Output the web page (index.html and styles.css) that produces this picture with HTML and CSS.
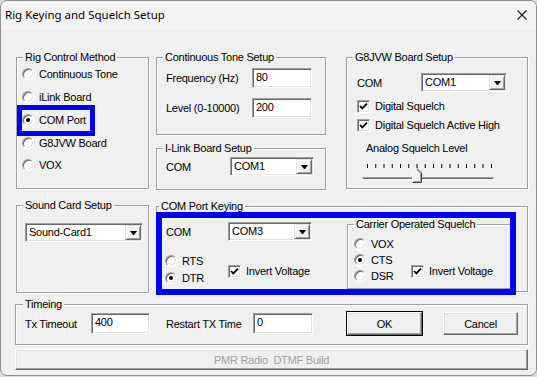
FILE: index.html
```html
<!DOCTYPE html>
<html lang="en">
<head>
  <meta charset="UTF-8" />
  <title>Rig Keying and Squelch Setup</title>
  <link rel="stylesheet" href="styles.css">
</head>
<body>
  <div class="window">
    <div class="titlebar">
      <span class="title">Rig Keying and Squelch Setup</span>
      <svg class="close" width="10" height="10" viewBox="0 0 10 10">
        <path d="M0.5 0.5 L9.5 9.5 M9.5 0.5 L0.5 9.5" stroke="#1a1a1a" stroke-width="1.1" fill="none" />
      </svg>
    </div>

    <div class="client">
      <!-- top row: method, tone + ilink, g8jvw -->
      <div class="row row-top">
        <div class="group rig">
          <span class="legend">Rig Control Method</span>
          <div class="radio-list">
            <div class="opt"><span class="radio"></span>Continuous Tone</div>
            <div class="opt"><span class="radio"></span>iLink Board</div>
            <div class="opt"><span class="radio on"></span>COM Port<span class="mark mark-com"></span></div>
            <div class="opt"><span class="radio"></span>G8JVW Board</div>
            <div class="opt"><span class="radio"></span>VOX</div>
          </div>
        </div>

        <div class="stack">
          <div class="group tone">
            <span class="legend">Continuous Tone Setup</span>
            <div class="tone-grid">
              <span>Frequency (Hz)</span>
              <div class="field">80</div>
              <span>Level (0-10000)</span>
              <div class="field">200</div>
            </div>
          </div>
          <div class="group ilink">
            <span class="legend">I-Link Board Setup</span>
            <div class="field-row">
              <span class="lbl-64">COM</span>
              <div class="combo w84"><span class="combo-text">COM1</span><span class="drop"></span></div>
            </div>
          </div>
        </div>

        <div class="group g8">
          <span class="legend">G8JVW Board Setup</span>
          <div class="field-row">
            <span class="lbl-64">COM</span>
            <div class="combo w86"><span class="combo-text">COM1</span><span class="drop"></span></div>
          </div>
          <div class="checks">
            <div class="opt chk-row"><span class="check"><svg width="9" height="9" viewBox="0 0 9 9"><path d="M1 4 L3.3 6.4 L8 1.7" stroke="#000" stroke-width="1.8" fill="none" /></svg></span>Digital Squelch</div>
            <div class="opt chk-row"><span class="check"><svg width="9" height="9" viewBox="0 0 9 9"><path d="M1 4 L3.3 6.4 L8 1.7" stroke="#000" stroke-width="1.8" fill="none" /></svg></span>Digital Squelch Active High</div>
          </div>
          <div class="slider-label">Analog Squelch Level</div>
          <svg class="slider" width="140" height="20" viewBox="0 0 140 20">
            <g stroke="#000" stroke-width="1">
              <path d="M7.5 0 V4 M15.75 0 V4 M24 0 V4 M32.25 0 V4 M40.5 0 V4 M48.75 0 V4 M57 0 V4 M65.25 0 V4 M73.5 0 V4 M81.75 0 V4 M90 0 V4 M98.25 0 V4 M106.5 0 V4 M114.75 0 V4 M123 0 V4 M131.5 0 V4" />
            </g>
            <path d="M2 13.5 H134" stroke="#a0a0a0" />
            <path d="M3 14.5 H133" stroke="#696969" />
            <path d="M2 15.5 H134" stroke="#fff" />
            <polygon points="52.5,9 57,4.5 61.5,9 61.5,18.5 52.5,18.5" fill="#f0f0f0" />
            <path d="M52.5 18 V9 L57 4.5" stroke="#fff" fill="none" />
            <path d="M57 4.5 L61.5 9 V18.5 H52.5" stroke="#404040" fill="none" />
            <path d="M57 5.8 L60.5 9.3 V17.5 H53.5" stroke="#a0a0a0" fill="none" />
          </svg>
        </div>
      </div>

      <!-- middle row: sound card, com port keying -->
      <div class="row row-mid">
        <div class="group sound">
          <span class="legend">Sound Card Setup</span>
          <div class="combo w118"><span class="combo-text">Sound-Card1</span><span class="drop"></span></div>
        </div>

        <div class="group keying">
          <span class="legend legend-tight">COM Port Keying</span>
          <div class="key-left">
            <div class="field-row">
              <span class="lbl-62">COM</span>
              <div class="combo w84"><span class="combo-text">COM3</span><span class="drop"></span></div>
            </div>
            <div class="key-lower">
              <div class="radios-key">
                <div class="opt"><span class="radio"></span>RTS</div>
                <div class="opt"><span class="radio on"></span>DTR</div>
              </div>
              <div class="opt chk-row key-check"><span class="check"><svg width="9" height="9" viewBox="0 0 9 9"><path d="M1 4 L3.3 6.4 L8 1.7" stroke="#000" stroke-width="1.8" fill="none" /></svg></span>Invert Voltage</div>
            </div>
          </div>
          <div class="group carrier">
            <span class="legend">Carrier Operated Squelch</span>
            <div class="car-body">
              <div class="radios-car">
                <div class="opt"><span class="radio"></span>VOX</div>
                <div class="opt"><span class="radio on"></span>CTS</div>
                <div class="opt"><span class="radio"></span>DSR</div>
              </div>
              <div class="opt chk-row car-check"><span class="check"><svg width="9" height="9" viewBox="0 0 9 9"><path d="M1 4 L3.3 6.4 L8 1.7" stroke="#000" stroke-width="1.8" fill="none" /></svg></span>Invert Voltage</div>
            </div>
          </div>
          <span class="mark mark-keying"></span>
        </div>
      </div>

      <!-- timing row -->
      <div class="group timing">
        <span class="legend legend-wide">Timeing</span>
        <div class="timing-row">
          <span class="lbl-tx">Tx Timeout</span>
          <div class="field w59">400</div>
          <span class="lbl-restart">Restart TX Time</span>
          <div class="field w60">0</div>
          <div class="btn btn-ok">OK</div>
          <div class="btn btn-cancel">Cancel</div>
        </div>
      </div>

      <div class="btn build">PMR Radio  DTMF Build</div>
    </div>
  </div>
</body>
</html>
```

FILE: styles.css
```css
* {
  box-sizing: border-box;
}

body {
  margin: 0;
  background: #dcdcdc;
  font-family: 'Liberation Sans', Arial, sans-serif;
  font-size: 11px;
  letter-spacing: -0.25px;
  color: #000;
}

.window {
  width: 537px;
  height: 376px;
  background: #f0f0f0;
  border: 1px solid #8e8e8e;
  border-radius: 7px;
  overflow: hidden;
}

.titlebar {
  height: 29px;
  background: #f4f4f6;
  display: flex;
  align-items: center;
  justify-content: space-between;
  padding: 0 9px 0 4px;
}

.title {
  font-family: 'Noto Sans', sans-serif;
  font-size: 11.5px;
  letter-spacing: 0;
  color: #000;
  padding-bottom: 2px;
}

.close {
  display: block;
  margin-bottom: 2px;
}

.client {
  padding: 27px 0 0 15px;
}

.row {
  display: flex;
  align-items: flex-start;
}

/* group boxes */
.group {
  position: relative;
  border: 1px solid #a0a0a0;
  box-shadow: 1px 1px 0 #fff, inset 1px 1px 0 #fff;
}

.legend {
  position: absolute;
  top: -7px;
  left: 6px;
  padding: 0 2px;
  background: #f0f0f0;
  line-height: 13px;
  white-space: nowrap;
}

.legend-tight { left: 2px; }
.legend-wide { left: 7px; }

.rig {
  width: 133px;
  height: 132px;
  padding: 5px 0 0 5px;
}

.stack {
  margin-left: 7px;
  width: 170px;
}

.tone {
  height: 78px;
  padding: 10px 0 0 9px;
}

.tone-grid {
  display: grid;
  grid-template-columns: 86px 60px;
  row-gap: 10px;
  align-items: center;
}

.ilink {
  margin-top: 13px;
  height: 42px;
  padding: 8px 0 0 9px;
}

.g8 {
  margin-left: 20px;
  width: 182px;
  height: 132px;
  padding: 15px 0 0 10px;
}

.sound {
  width: 133px;
  height: 88px;
  padding: 17px 0 0 8px;
}

.keying {
  margin-left: 7px;
  margin-top: 1px;
  width: 372px;
  height: 86px;
  display: flex;
  align-items: flex-start;
}

.timing {
  margin: 11px 0 0 -1px;
  width: 513px;
  height: 41px;
  padding: 7px 0 0 9px;
}

.row-mid {
  margin-top: 15px;
}

/* option rows */
.radio-list .opt {
  height: 22.75px;
}

.opt {
  position: relative;
  display: flex;
  align-items: center;
  gap: 5px;
  white-space: nowrap;
}

.radio {
  flex: none;
  width: 12px;
  height: 12px;
  border-radius: 50%;
  background: #fff;
  border: 1px solid;
  border-color: #a0a0a0 #fff #fff #a0a0a0;
  box-shadow: inset 1px 1px 0 #696969, inset -1px -1px 0 #e3e3e3;
  display: flex;
  align-items: center;
  justify-content: center;
}

.radio.on::after {
  content: "";
  width: 4px;
  height: 4px;
  border-radius: 50%;
  background: #000;
}

.check {
  flex: none;
  width: 13px;
  height: 13px;
  background: #fff;
  border: 1px solid;
  border-color: #a0a0a0 #fff #fff #a0a0a0;
  box-shadow: inset 1px 1px 0 #696969, inset -1px -1px 0 #e3e3e3;
  display: flex;
  align-items: center;
  justify-content: center;
}

.check svg {
  display: block;
}

.chk-row {
  height: 19px;
}

.checks {
  margin-top: 4.5px;
}

.slider-label {
  margin: 7px 0 0 9px;
  line-height: 13px;
}

.slider {
  display: block;
  margin: 9.5px 0 0 3px;
}

/* fields */
.field-row {
  display: flex;
  align-items: center;
}

.lbl-64 { width: 64px; }
.lbl-62 { width: 62px; }

.field {
  height: 20px;
  background: #fff;
  border: 1px solid;
  border-color: #a0a0a0 #fff #fff #a0a0a0;
  box-shadow: inset 1px 1px 0 #696969, inset -1px -1px 0 #e3e3e3;
  padding: 0 3px;
  line-height: 17px;
}

.w59 { width: 59px; height: 21px; }
.w60 { width: 60px; height: 21px; }

.combo {
  height: 19px;
  display: flex;
  background: #fff;
  border: 1px solid;
  border-color: #a0a0a0 #fff #fff #a0a0a0;
  box-shadow: inset 1px 1px 0 #696969, inset -1px -1px 0 #e3e3e3;
  padding: 1px;
}

.w84 { width: 84px; }
.w86 { width: 86px; }
.w118 { width: 118px; }

.combo-text {
  flex: 1;
  padding-left: 2px;
  line-height: 15px;
}

.drop {
  width: 16px;
  background: #f0f0f0;
  border: 1px solid;
  border-color: #e3e3e3 #696969 #696969 #e3e3e3;
  box-shadow: inset 1px 1px 0 #fff, inset -1px -1px 0 #a0a0a0;
  display: flex;
  align-items: center;
  justify-content: center;
}

.drop::after {
  content: "";
  width: 1px;
  border-left: 3px solid transparent;
  border-right: 3px solid transparent;
  border-top: 4px solid #000;
  margin-top: 1px;
}

/* com port keying */
.key-left {
  width: 190px;
  padding: 15px 0 0 9px;
}

.key-lower {
  display: flex;
  align-items: flex-end;
  margin: 11.5px 0 0 -1px;
}

.radios-key {
  width: 63px;
}

.radios-key .opt {
  height: 17px;
}

.key-check {
  margin-bottom: 6px;
}

.carrier {
  margin-top: 17px;
  width: 166px;
  height: 65px;
}

.car-body {
  display: flex;
  align-items: flex-end;
  padding: 11px 0 0 6px;
}

.radios-car {
  width: 57px;
}

.radios-car .opt {
  height: 16px;
}

.car-check {
  margin-bottom: 3.5px;
}

/* blue highlight boxes */
.mark {
  position: absolute;
  border: 5px solid #0000f5;
  pointer-events: none;
}

.mark-com {
  left: -5px;
  top: -4px;
  width: 78px;
  height: 31px;
}

.mark-keying {
  left: -1px;
  top: 5px;
  width: 360px;
  height: 83px;
  border-width: 6px;
}

/* timing */
.timing-row {
  display: flex;
  align-items: center;
}

.lbl-tx { width: 66px; }

.lbl-restart {
  width: 87px;
  margin-left: 16px;
}

.btn {
  height: 23px;
  background: #f0f0f0;
  border: 1px solid;
  border-color: #fff #696969 #696969 #fff;
  box-shadow: inset -1px -1px 0 #a0a0a0, inset 1px 1px 0 #e3e3e3;
  display: flex;
  align-items: center;
  justify-content: center;
}

.btn-ok {
  width: 75px;
  margin-left: 34px;
  outline: 1px solid #000;
}

.btn-cancel {
  width: 75px;
  margin-left: 21px;
}

.build {
  margin: 4px 0 0 -1px;
  width: 513px;
  height: 21px;
  color: #a0a0a0;
  white-space: pre;
}
```
